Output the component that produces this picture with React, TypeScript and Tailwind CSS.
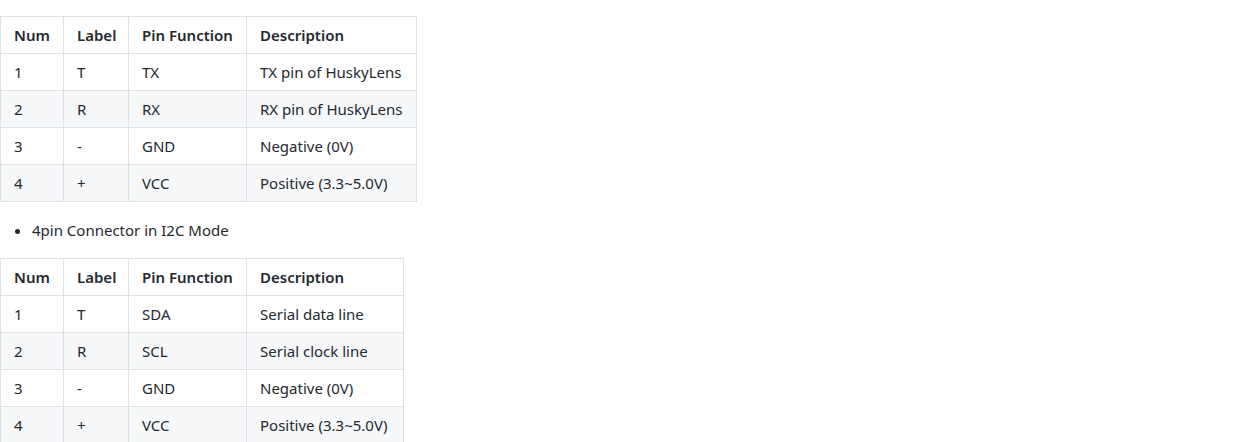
import React from "react";

type Row = [string, string, string, string];

const uartRows: Row[] = [
  ["1", "T", "TX", "TX pin of HuskyLens"],
  ["2", "R", "RX", "RX pin of HuskyLens"],
  ["3", "-", "GND", "Negative (0V)"],
  ["4", "+", "VCC", "Positive (3.3~5.0V)"],
];

const i2cRows: Row[] = [
  ["1", "T", "SDA", "Serial data line"],
  ["2", "R", "SCL", "Serial clock line"],
  ["3", "-", "GND", "Negative (0V)"],
  ["4", "+", "VCC", "Positive (3.3~5.0V)"],
];

const cell = "border border-[#dfe2e5] px-[13px] py-[6px] text-left whitespace-nowrap";

function PinTable({ rows, wide }: { rows: Row[]; wide: boolean }) {
  return (
    <table className={`border-collapse table-fixed ${wide ? "w-[416px]" : "w-[403px]"}`}>
      <colgroup>
        <col className="w-[63px]" />
        <col className="w-[65px]" />
        <col className="w-[118px]" />
        <col className={wide ? "w-[170px]" : "w-[157px]"} />
      </colgroup>
      <thead>
        <tr className="bg-white">
          <th className={`${cell} font-semibold`}>Num</th>
          <th className={`${cell} font-semibold`}>Label</th>
          <th className={`${cell} font-semibold`}>Pin Function</th>
          <th className={`${cell} font-semibold`}>Description</th>
        </tr>
      </thead>
      <tbody>
        {rows.map((r, i) => (
          <tr key={i} className={i % 2 === 1 ? "bg-[#f6f8fa]" : "bg-white"}>
            {r.map((c, j) => (
              <td key={j} className={cell}>
                {c}
              </td>
            ))}
          </tr>
        ))}
      </tbody>
    </table>
  );
}

export default function App() {
  return (
    <div className="bg-white min-h-screen pt-4 text-[15px] leading-6 text-[#24292e] font-['Noto_Sans',sans-serif]">
      <PinTable rows={uartRows} wide />
      <ul className="list-disc pl-8 my-4">
        <li>4pin Connector in I2C Mode</li>
      </ul>
      <PinTable rows={i2cRows} wide={false} />
    </div>
  );
}
